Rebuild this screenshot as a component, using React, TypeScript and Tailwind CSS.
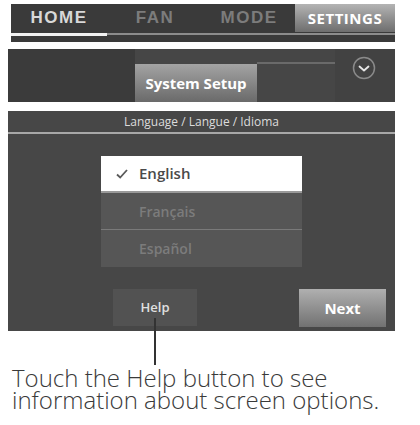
import React from 'react';

const tabs = [
  { label: 'HOME', w: 'w-[96px]', text: 'text-[#d8d8d8]' },
  { label: 'FAN', w: 'w-[96px]', text: 'text-[#7c7c7c]' },
  { label: 'MODE', w: 'w-[92px]', text: 'text-[#7c7c7c]' },
];

const languages = ['English', 'Français', 'Español'];

const App: React.FC = () => {
  return (
    <div className="relative w-[420px] h-[425px] bg-white overflow-hidden font-['Open_Sans',sans-serif]">
      {/* top tab bar */}
      <div className="ml-[11px] mt-[4px] w-[384px] h-[38px] bg-[#3a3a3a] flex flex-col">
        <div className="flex h-[28px]">
          {tabs.map((t) => (
            <div
              key={t.label}
              className={`${t.w} flex items-center justify-center font-['Liberation_Sans',sans-serif] font-bold text-[17px] tracking-[1.5px] ${t.text}`}
            >
              {t.label}
            </div>
          ))}
          <div className="w-[100px] flex items-center justify-center bg-gradient-to-b from-[#b4b4b4] to-[#6e6e6e] text-white font-bold text-[15px] tracking-[0.5px]">
            SETTINGS
          </div>
        </div>
        <div className="flex h-[4px] items-center">
          <div className="w-[96px] h-[3px] bg-[#f2f2f2]" />
          <div className="flex-1 h-[2px] bg-[#8c8c8c]" />
        </div>
      </div>

      {/* settings menu strip */}
      <div className="ml-[8px] mt-[7px] w-[387px] h-[53px] bg-[#3e3e3e] flex">
        <div className="w-[127px] bg-[#3b3b3b]" />
        <div className="w-[200px] flex flex-col bg-[#464646]">
          <div className="h-[15px] flex">
            <div className="w-[122px]" />
            <div className="flex-1 flex items-end">
              <div className="w-full h-[2px] bg-[#6a6a6a]" />
            </div>
          </div>
          <div className="flex flex-1">
            <div className="w-[122px] flex items-center justify-center bg-gradient-to-b from-[#a4a4a4] to-[#6a6a6a] text-white font-bold text-[15px]">
              System Setup
            </div>
          </div>
        </div>
        <div className="flex-1 flex justify-center pt-[7px] pr-[3px] bg-[#424242]">
          <svg width="24" height="24" viewBox="0 0 24 24">
            <circle cx="12" cy="12" r="10.5" fill="none" stroke="#8a8a8a" strokeWidth="1.5" />
            <path d="M7.5 10.5 L12 14.5 L16.5 10.5" fill="none" stroke="#e6e6e6" strokeWidth="1.8" strokeLinecap="round" strokeLinejoin="round" />
          </svg>
        </div>
      </div>

      {/* language panel */}
      <div className="ml-[8px] mt-[9px] w-[387px] h-[220px] bg-[#474747] flex flex-col">
        <div className="h-[21px] flex items-center justify-center text-[#dcdcdc] text-[12px]">
          Language / Langue / Idioma
        </div>
        <div className="h-[2px] bg-[#a8a8a8]" />
        <div className="ml-[93px] mt-[22px] w-[201px] flex flex-col">
          {languages.map((lang, i) =>
            i === 0 ? (
              <div
                key={lang}
                className="h-[37px] bg-white flex items-center gap-[11px] pl-[15px] text-[#4a4a4a] font-semibold text-[15px] border-b-2 border-[#9a9a9a]"
              >
                <svg width="12" height="10" viewBox="0 0 12 10">
                  <path d="M1 5.5 L4.2 8.5 L11 1" fill="none" stroke="#5a5a5a" strokeWidth="1.8" />
                </svg>
                {lang}
              </div>
            ) : (
              <div
                key={lang}
                className={`h-[37px] bg-[#565656] flex items-center pl-[38px] text-[#7c7c7c] font-semibold text-[14px] ${
                  i === 1 ? 'border-b border-[#7a7a7a]' : ''
                }`}
              >
                {lang}
              </div>
            )
          )}
        </div>
        <div className="mt-[22px] flex">
          <div className="ml-[105px] w-[84px] h-[37px] bg-[#525252] flex items-center justify-center text-[#e0e0e0] text-[13px] font-semibold">
            Help
          </div>
          <div className="ml-[102px] w-[87px] h-[38px] bg-gradient-to-b from-[#b0b0b0] to-[#727272] flex items-center justify-center text-white font-bold text-[15px]">
            Next
          </div>
        </div>
      </div>

      {/* callout leader line */}
      <div className="absolute left-[154px] top-[318px] w-[2px] h-[47px] bg-[#333]" />

      <p className="ml-[12px] mt-[36px] text-[24px] leading-[22px] text-[#3a3a3a] font-light">
        Touch the Help button to see
        <br />
        information about screen options.
      </p>
    </div>
  );
};

export default App;
